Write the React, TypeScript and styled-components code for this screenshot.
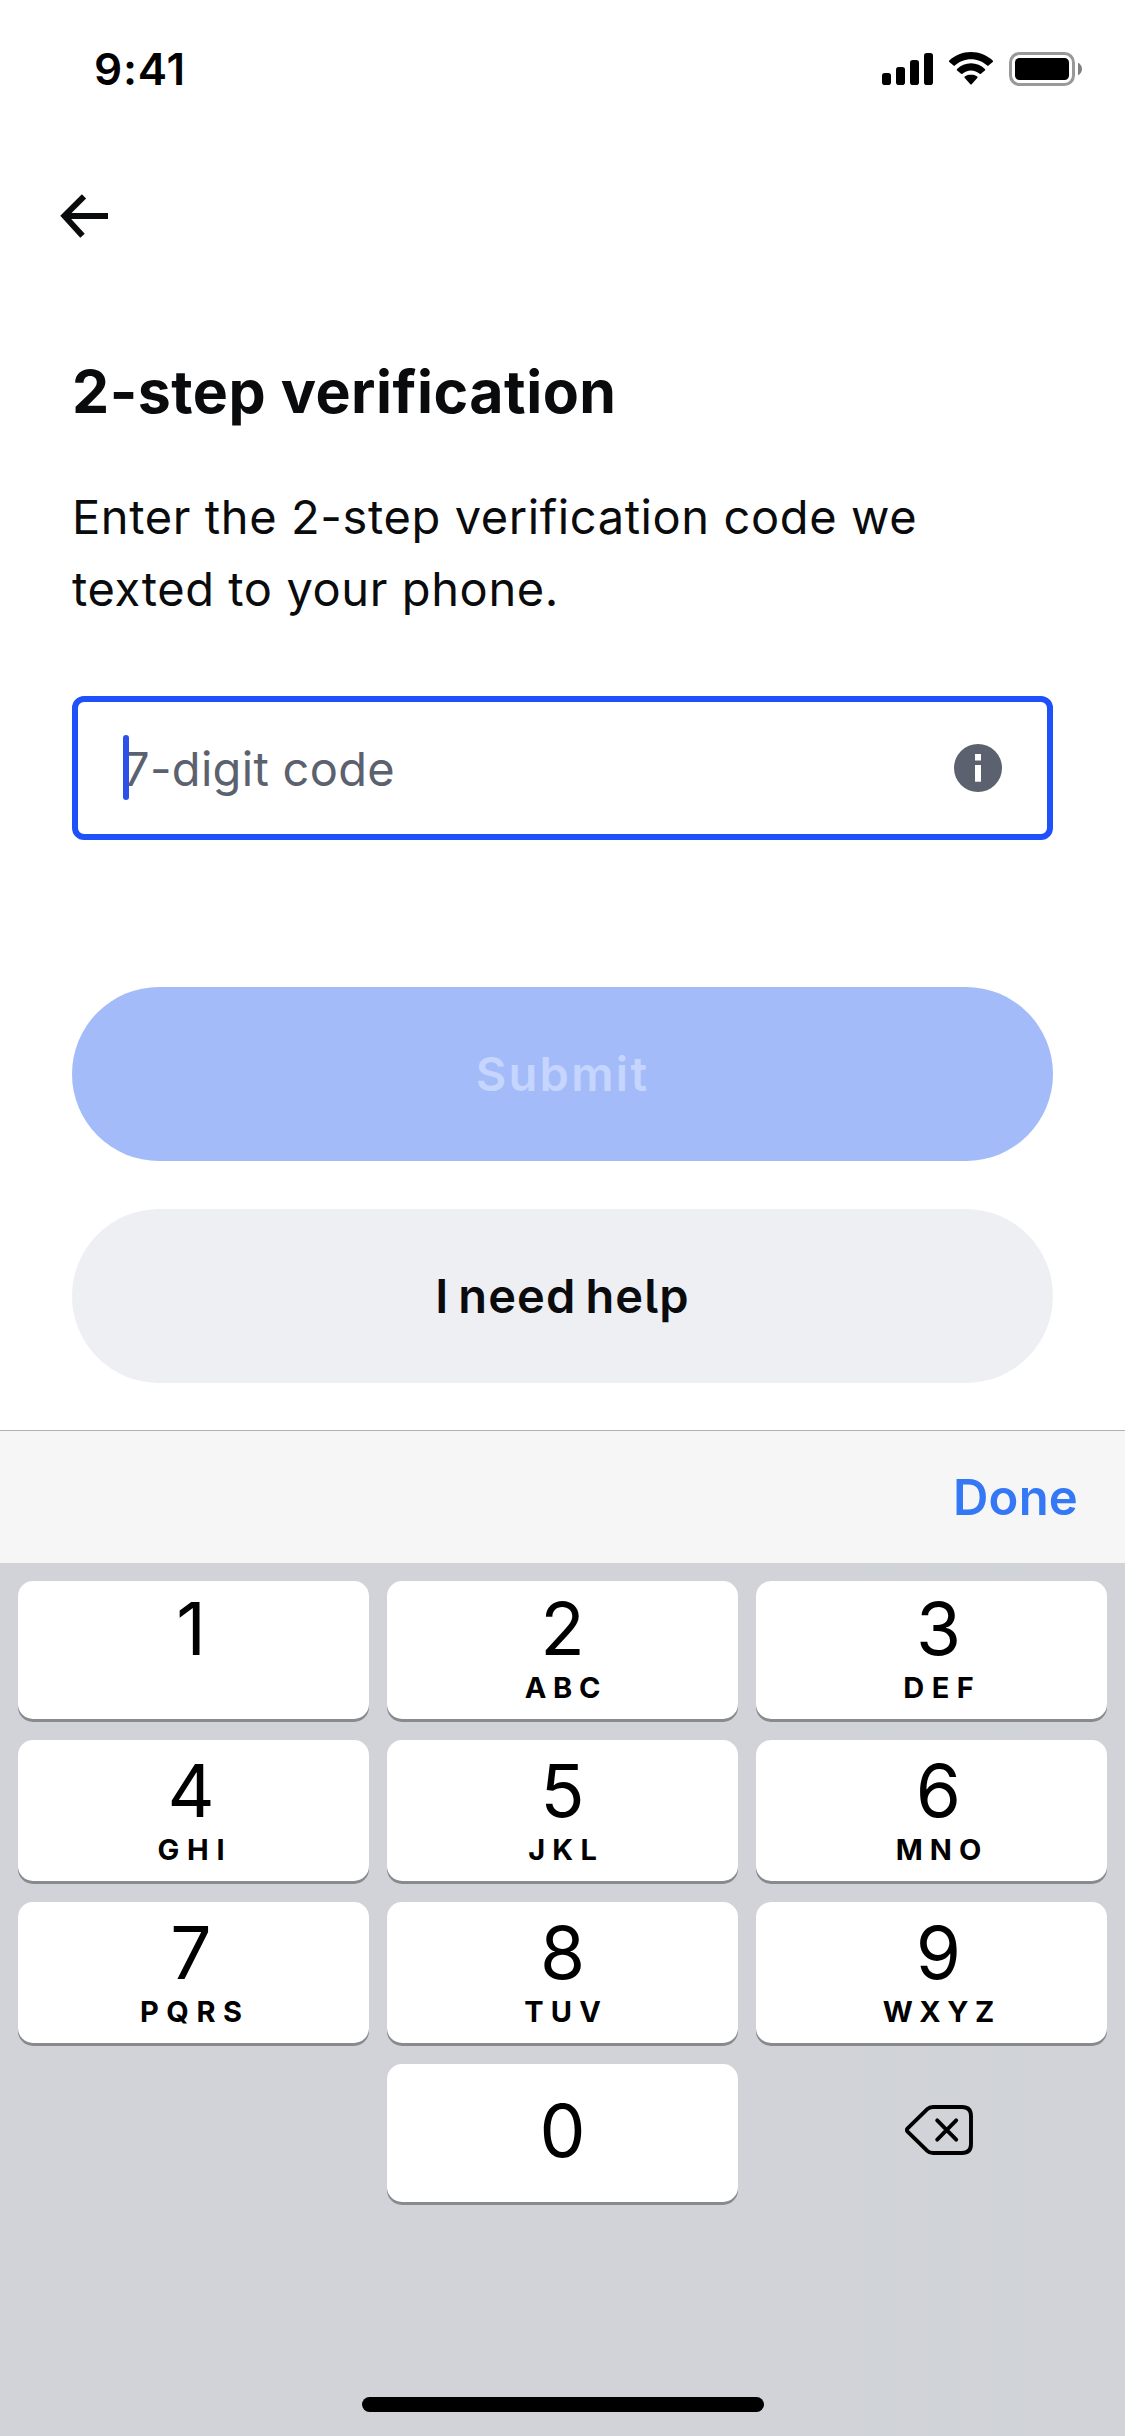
import React from "react";
import styled, { createGlobalStyle } from "styled-components";

const GlobalStyle = createGlobalStyle`
  *, *::before, *::after { box-sizing: border-box; }
  body { margin: 0; background: #ffffff; }
  button { border: 0; padding: 0; font: inherit; color: inherit; background: none; }
`;

const Screen = styled.div`
  display: flex;
  flex-direction: column;
  width: 1125px;
  height: 2436px;
  overflow: hidden;
  background: #ffffff;
  color: #0a0b0d;
  font-family: Inter, "Noto Sans", sans-serif;
`;

const StatusBar = styled.header`
  display: flex;
  justify-content: space-between;
  align-items: center;
  height: 138px;
  padding: 0 43px 0 94px;
  color: #000000;
`;

const Clock = styled.span`
  font-size: 44px;
  font-weight: 600;
  line-height: 60px;
  letter-spacing: 0.8px;
`;

const StatusIcons = styled.div`
  display: flex;
  align-items: center;
  gap: 15px;
`;

const Glyph = styled.svg`
  display: block;
  flex: none;
`;

const NavBar = styled.nav`
  display: flex;
  align-items: center;
  height: 156px;
  padding-left: 60px;
`;

const Content = styled.main`
  display: flex;
  flex-direction: column;
  height: 1136px;
  padding: 62px 72px 0;
`;

const Title = styled.h1`
  margin: 0 0 53px;
  font-size: 59px;
  font-weight: 700;
  line-height: 72px;
  letter-spacing: 0.5px;
`;

const Lead = styled.p`
  margin: 0 0 71px;
  font-size: 47px;
  font-weight: 400;
  line-height: 72px;
  letter-spacing: 0.6px;
`;

const Field = styled.label`
  position: relative;
  display: flex;
  flex: none;
  justify-content: space-between;
  align-items: center;
  height: 144px;
  margin-bottom: 147px;
  padding: 0 45px;
  border: 6px solid #1f51fb;
  border-radius: 12px;
`;

const Placeholder = styled.span`
  padding-top: 2px;
  color: #5b616e;
  font-size: 47px;
  line-height: 60px;
  letter-spacing: 0.3px;
`;

const Caret = styled.span`
  position: absolute;
  left: 45px;
  top: 33px;
  width: 6px;
  height: 65px;
  border-radius: 3px;
  background: #2b51e8;
`;

const Actions = styled.div`
  display: grid;
  flex: none;
  grid-auto-rows: 174px;
  gap: 48px;
`;

const PillButton = styled.button<{ $fill: string; $ink: string; $tracking: number }>`
  border-radius: 87px;
  background: ${(p) => p.$fill};
  color: ${(p) => p.$ink};
  font-size: 47px;
  font-weight: 600;
  line-height: 60px;
  letter-spacing: ${(p) => p.$tracking}px;
  word-spacing: -4px;
  font-feature-settings: "cv05";
`;

const Accessory = styled.div`
  display: flex;
  justify-content: flex-end;
  align-items: center;
  height: 133px;
  padding-right: 47px;
  border-top: 1px solid #b2b2b4;
  background: #f6f6f6;
`;

const DoneButton = styled.button`
  padding-top: 1px;
  color: #3478f6;
  font-size: 49px;
  font-weight: 600;
  line-height: 60px;
  letter-spacing: 0.2px;
`;

const Keyboard = styled.section`
  display: flex;
  flex-direction: column;
  justify-content: space-between;
  align-items: center;
  flex: 1;
  padding: 18px 18px 24px;
  background: linear-gradient(
    90deg,
    #d2d3d8 0 863px,
    #d0d4d8 863px 897px,
    #d2d3d8 897px 926px,
    #d0d4d8 926px 960px,
    #d2d3d8 960px 991px,
    #d0d4d8 991px 1024px,
    #d2d3d8 1024px
  );
  color: #000000;
`;

const Keys = styled.div`
  display: grid;
  grid-template-columns: repeat(3, 351px);
  grid-template-rows: 138px 141px 141px 138px;
  gap: 21px 18px;
`;

/* $shift nudges the labels toward the edge of the screen in the outer columns */
const Key = styled.button<{ $top: number; $shift: number }>`
  display: flex;
  flex-direction: column;
  align-items: center;
  gap: 7px;
  padding-top: ${(p) => p.$top}px;
  padding-left: ${(p) => Math.max(0, p.$shift)}px;
  padding-right: ${(p) => Math.max(0, -p.$shift)}px;
  border-radius: 15px;
  background: #ffffff;
  box-shadow: 0 3px 0 #888a8d;
`;

const DeleteKey = styled.button`
  display: flex;
  justify-content: center;
  align-items: center;
  padding: 0 0 6px 15px;
`;

const Digit = styled.span`
  font-size: 73px;
  font-weight: 400;
  line-height: 74px;
`;

const Letters = styled.span<{ $tracking: number }>`
  padding-left: ${(p) => p.$tracking}px;
  font-size: 29px;
  font-weight: 700;
  line-height: 30px;
  letter-spacing: ${(p) => p.$tracking}px;
`;

const HomeIndicator = styled.div`
  width: 402px;
  height: 15px;
  border-radius: 8px;
  background: #000000;
`;

type KeySpec = { digit: string; letters?: string; tracking?: number };

const keyRows: { top: number; keys: KeySpec[] }[] = [
  {
    top: 11,
    keys: [
      { digit: "1" },
      { digit: "2", letters: "ABC", tracking: 6.7 },
      { digit: "3", letters: "DEF", tracking: 7.4 },
    ],
  },
  {
    top: 14,
    keys: [
      { digit: "4", letters: "GHI", tracking: 7.8 },
      { digit: "5", letters: "JKL", tracking: 7.2 },
      { digit: "6", letters: "MNO", tracking: 7.0 },
    ],
  },
  {
    top: 14,
    keys: [
      { digit: "7", letters: "PQRS", tracking: 7.5 },
      { digit: "8", letters: "TUV", tracking: 7.2 },
      { digit: "9", letters: "WXYZ", tracking: 6.5 },
    ],
  },
];

const columnShift = [-5, 0, 14];

const SignalIcon = () => (
  <Glyph width="51" height="34" viewBox="0 0 51 34">
    <rect x="0" y="21" width="9" height="12" rx="2.8" />
    <rect x="14" y="15" width="9" height="18" rx="2.8" />
    <rect x="28" y="8" width="9" height="25" rx="2.8" />
    <rect x="42" y="1" width="9" height="32" rx="2.8" />
  </Glyph>
);

const WifiIcon = () => (
  <Glyph width="46" height="34" viewBox="0 0 46 34">
    <path d="M23 7.2C29.2 7.2 34.9 9.6 39.2 13.6C39.6 14 40.1 14 40.5 13.6L44.7 10.1C45.2 9.7 45.2 9 44.7 8.5C38.9 3.2 31.4 0 23 0C14.6 0 7.1 3.2 1.3 8.5C.8 9 .8 9.7 1.3 10.1L5.5 13.6C5.9 14 6.4 14 6.8 13.6C11.1 9.6 16.8 7.2 23 7.2Z" />
    <path d="M23 18.4C26.3 18.4 29.3 19.7 31.6 21.7C32 22.1 32.5 22.1 32.9 21.7L36.9 18.6C37.4 18.2 37.4 17.5 36.9 17C33.2 13.3 28.4 11.2 23 11.2C17.6 11.2 12.8 13.3 9.1 17C8.6 17.5 8.6 18.2 9.1 18.6L13.1 21.7C13.5 22.1 14 22.1 14.4 21.7C16.7 19.7 19.7 18.4 23 18.4Z" />
    <path d="M29.2 25.9C29.7 25.5 29.7 24.9 29.2 24.5C27.5 23.2 25.3 22.8 23 22.8C20.7 22.8 18.5 23.2 16.8 24.5C16.3 24.9 16.3 25.5 16.8 25.9L22.3 32.2C22.7 32.7 23.3 32.7 23.7 32.2Z" />
  </Glyph>
);

const BatteryIcon = () => (
  <Glyph width="73" height="34" viewBox="0 0 73 34">
    <rect x="1.5" y="1.5" width="63" height="31" rx="9" fill="none" stroke="#999999" strokeWidth="3" />
    <rect x="6" y="6" width="54" height="22" rx="4.5" />
    <path d="M69 10.7C71.4 11.8 73 14.2 73 17S71.4 22.1 69 23.2Z" fill="#808080" />
  </Glyph>
);

const BackArrow = () => (
  <Glyph width="48" height="48" viewBox="0 0 48 48" fill="none" stroke="#0a0b0d" strokeWidth="6">
    <path d="M48 24H5" />
    <path d="M24 4.3L4.400 23.9L22.5 43.8" />
  </Glyph>
);

const InfoIcon = () => (
  <Glyph width="48" height="48" viewBox="0 0 48 48">
    <circle cx="24" cy="24" r="24" fill="#5b616e" />
    <rect x="21" y="10" width="6" height="6.5" fill="#ffffff" />
    <rect x="21" y="21" width="6" height="16.7" fill="#ffffff" />
  </Glyph>
);

const BackspaceIcon = () => (
  <Glyph
    width="68"
    height="50"
    viewBox="0 0 68 50"
    fill="none"
    stroke="#000000"
    strokeWidth="3.9"
    strokeLinecap="round"
    strokeLinejoin="round"
  >
    <path d="M28 2H57Q66 2 66 11V39Q66 48 57 48H28Q24.5 48 22.3 45.8L2.600 26.6Q1.1 25 2.600 23.4L22.3 4.2Q24.5 2 28 2Z" />
    <path d="M32.2 15.4L51.2 34.6M51.2 15.4L32.2 34.6" />
  </Glyph>
);

export default function App() {
  return (
    <>
      <GlobalStyle />
      <Screen>
        <StatusBar>
          <Clock>9:41</Clock>
          <StatusIcons>
            <SignalIcon />
            <WifiIcon />
            <BatteryIcon />
          </StatusIcons>
        </StatusBar>
        <NavBar>
          <BackArrow />
        </NavBar>
        <Content>
          <Title>2-step verification</Title>
          <Lead>
            Enter the 2-step verification code we
            <br />
            texted to your phone.
          </Lead>
          <Field>
            <Placeholder>7-digit code</Placeholder>
            <Caret />
            <InfoIcon />
          </Field>
          <Actions>
            <PillButton $fill="#a4bbfa" $ink="#c6d5fd" $tracking={2.3}>
              Submit
            </PillButton>
            <PillButton $fill="#eeeff3" $ink="#0a0b0d" $tracking={1.1}>
              I need help
            </PillButton>
          </Actions>
        </Content>
        <Accessory>
          <DoneButton>Done</DoneButton>
        </Accessory>
        <Keyboard>
          <Keys>
            {keyRows.map((row) =>
              row.keys.map((key, column) => (
                <Key key={key.digit} $top={row.top} $shift={columnShift[column]}>
                  <Digit>{key.digit}</Digit>
                  {key.letters && <Letters $tracking={key.tracking ?? 7}>{key.letters}</Letters>}
                </Key>
              ))
            )}
            <span />
            <Key $top={30} $shift={0}>
              <Digit>0</Digit>
            </Key>
            <DeleteKey aria-label="Delete">
              <BackspaceIcon />
            </DeleteKey>
          </Keys>
          <HomeIndicator />
        </Keyboard>
      </Screen>
    </>
  );
}
